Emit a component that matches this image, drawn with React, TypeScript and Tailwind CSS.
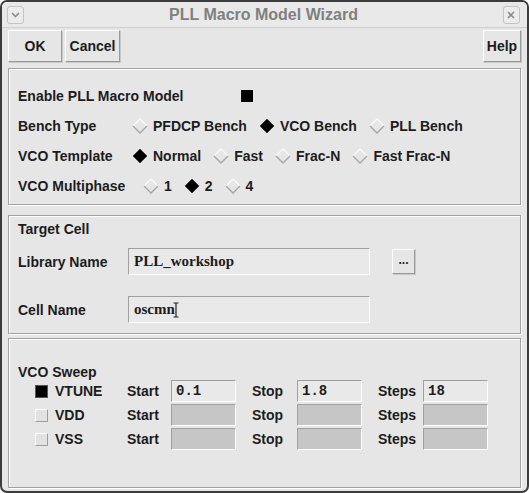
import React from "react"

const label = "text-[14px] font-bold text-[#1c1c1c] leading-none whitespace-nowrap"

function Diamond({ on }: { on?: boolean }) {
  return (
    <svg width="16" height="16" viewBox="0 0 16 16" className="shrink-0">
      {on ? (
        <polygon points="8,1 15,8 8,15 1,8" fill="#000" stroke="#333" strokeWidth="0.8" />
      ) : (
        <>
          <polyline points="1,8 8,1 15,8" fill="none" stroke="#fafafa" strokeWidth="1.3" />
          <polyline points="1,8 8,15 15,8" fill="none" stroke="#a4a4a4" strokeWidth="1.3" />
        </>
      )}
    </svg>
  )
}

function Radio({ on, text }: { on?: boolean; text: string }) {
  return (
    <div className="flex items-center">
      <Diamond on={on} />
      <span className={`${label} ml-[5px]`}>{text}</span>
    </div>
  )
}

function Check({ on }: { on?: boolean }) {
  return on ? (
    <div className="w-[13px] h-[13px] bg-black border border-[#555] shrink-0" />
  ) : (
    <div className="w-[13px] h-[13px] bg-[#e2e2e2] border border-t-white border-l-white border-b-[#9c9c9c] border-r-[#9c9c9c] shrink-0" />
  )
}

function Frame({ className, children }: { className?: string; children: React.ReactNode }) {
  return (
    <div
      className={`mx-[6px] border border-[#a2a2a2] shadow-[1px_1px_0_#ffffff,inset_1px_1px_0_#ffffff] ${className ?? ""}`}
    >
      {children}
    </div>
  )
}

function Cursor() {
  return (
    <svg width="6" height="16" viewBox="0 0 6 16" className="-ml-[2px]">
      <path d="M0.5 1 H5.5 M3 1 V15 M0.5 15 H5.5" stroke="#222" strokeWidth="1.2" fill="none" />
    </svg>
  )
}

function Field({ value, disabled, mono }: { value?: string; disabled?: boolean; mono?: boolean }) {
  return (
    <div
      className={`w-[65px] h-[22px] flex items-center pl-[4px] border border-t-[#a0a0a0] border-l-[#a0a0a0] border-b-white border-r-white ${
        disabled ? "bg-[#c6c6c6]" : "bg-[#e9e9e9]"
      } ${mono ? "font-['Liberation_Mono'] text-[14px] font-bold text-[#1c1c1c]" : ""}`}
    >
      {value}
    </div>
  )
}

function SweepRow({ name, on, start, stop, steps }: { name: string; on?: boolean; start?: string; stop?: string; steps?: string }) {
  const dis = !on
  return (
    <div className="flex items-center h-[22px] mb-[2px]">
      <div className="ml-[17px]">
        <Check on={on} />
      </div>
      <span className={`${label} ml-[7px] w-[72px]`}>{name}</span>
      <span className={`${label} w-[44px]`}>Start</span>
      <Field value={start} disabled={dis} mono />
      <span className={`${label} ml-[16px] w-[45px]`}>Stop</span>
      <Field value={stop} disabled={dis} mono />
      <span className={`${label} ml-[16px] w-[45px]`}>Steps</span>
      <Field value={steps} disabled={dis} mono />
    </div>
  )
}

function ToolButton({ children, className }: { children: React.ReactNode; className?: string }) {
  return (
    <div
      className={`h-[32px] flex items-center justify-center bg-[#e6e6e6] border border-t-white border-l-white border-b-[#9a9a9a] border-r-[#9a9a9a] shadow-[1px_1px_0_#c8c8c8] ${label} ${className ?? ""}`}
    >
      {children}
    </div>
  )
}

export default function App() {
  return (
    <div className="w-[529px] h-[493px] bg-[#e6e6e6] border-2 border-[#3c3c3c] rounded-[7px] overflow-hidden flex flex-col font-['Liberation_Sans',Arial,sans-serif]">
      {/* Title bar */}
      <div className="h-[26px] shrink-0 flex items-center justify-between px-[5px] border-b border-[#cfcfcf] bg-[#e9e9e9]">
        <div className="w-[17px] h-[18px] rounded-[3px] border border-[#c4c4c4] bg-[#ececec] flex items-center justify-center">
          <svg width="9" height="6" viewBox="0 0 9 6">
            <path d="M1 1 L4.5 4.5 L8 1" stroke="#8a8a8a" strokeWidth="1.6" fill="none" />
          </svg>
        </div>
        <span className="text-[16px] font-bold text-[#808080] leading-none">PLL Macro Model Wizard</span>
        <div className="w-[17px] h-[18px] rounded-[3px] border border-[#c4c4c4] bg-[#ececec] flex items-center justify-center mr-[2px]">
          <svg width="8" height="8" viewBox="0 0 8 8">
            <path d="M1 1 L7 7 M7 1 L1 7" stroke="#8a8a8a" strokeWidth="1.6" />
          </svg>
        </div>
      </div>

      {/* Toolbar */}
      <div className="flex pt-[2px] px-[6px] shrink-0">
        <ToolButton className="w-[54px]">OK</ToolButton>
        <ToolButton className="w-[55px] ml-[3px]">Cancel</ToolButton>
        <div className="flex-1" />
        <ToolButton className="w-[38px]">Help</ToolButton>
      </div>

      {/* Model options */}
      <Frame className="mt-[6px] h-[137px] pt-[12px] pl-[9px]">
        <div className="flex items-center h-[30px]">
          <span className={`${label} w-[223px]`}>Enable PLL Macro Model</span>
          <div className="w-[12px] h-[12px] bg-black" />
        </div>
        <div className="flex items-center h-[30px]">
          <span className={`${label} w-[114px]`}>Bench Type</span>
          <div className="flex items-center gap-[12px]">
            <Radio text="PFDCP Bench" />
            <Radio on text="VCO Bench" />
            <Radio text="PLL Bench" />
          </div>
        </div>
        <div className="flex items-center h-[30px]">
          <span className={`${label} w-[114px]`}>VCO Template</span>
          <div className="flex items-center gap-[12px]">
            <Radio on text="Normal" />
            <Radio text="Fast" />
            <Radio text="Frac-N" />
            <Radio text="Fast Frac-N" />
          </div>
        </div>
        <div className="flex items-center h-[30px]">
          <span className={`${label} w-[125px]`}>VCO Multiphase</span>
          <div className="flex items-center gap-[12px]">
            <Radio text="1" />
            <Radio on text="2" />
            <Radio text="4" />
          </div>
        </div>
      </Frame>

      {/* Target cell */}
      <Frame className="mt-[10px] h-[119px] pt-[4px] pl-[9px]">
        <div className={`${label} h-[18px] flex items-center`}>Target Cell</div>
        <div className="flex items-center mt-[10px]">
          <span className={`${label} w-[110px]`}>Library Name</span>
          <div className="w-[242px] h-[27px] bg-[#e9e9e9] border border-t-[#a0a0a0] border-l-[#a0a0a0] border-b-white border-r-white flex items-center pl-[5px] font-['Liberation_Serif'] text-[15px] font-bold text-[#1c1c1c]">
            PLL_workshop
          </div>
          <ToolButton className="w-[23px] !h-[25px] ml-[22px]">
            <span className="text-[12px] leading-none -mt-[4px]">...</span>
          </ToolButton>
        </div>
        <div className="flex items-center mt-[21px]">
          <span className={`${label} w-[110px]`}>Cell Name</span>
          <div className="w-[242px] h-[27px] bg-[#e9e9e9] border border-t-[#a0a0a0] border-l-[#a0a0a0] border-b-white border-r-white flex items-center pl-[5px] font-['Liberation_Serif'] text-[15px] font-bold text-[#1c1c1c]">
            oscmn
            <Cursor />
          </div>
        </div>
      </Frame>

      {/* VCO sweep */}
      <Frame className="mt-[4px] h-[150px] pl-[9px]">
        <div className={`${label} mt-[25px] h-[16px] flex items-center`}>VCO Sweep</div>
        <SweepRow name="VTUNE" on start="0.1" stop="1.8" steps="18" />
        <SweepRow name="VDD" />
        <SweepRow name="VSS" />
      </Frame>
    </div>
  )
}
